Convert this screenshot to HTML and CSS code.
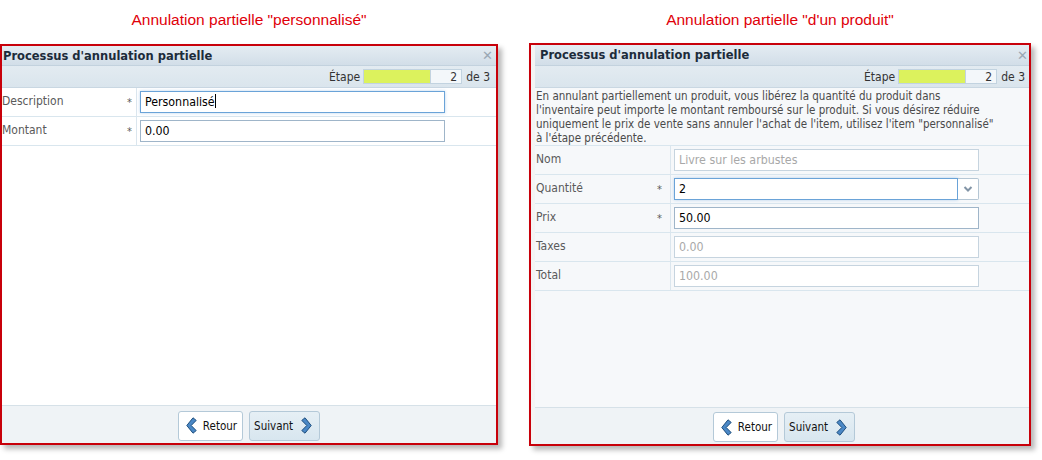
FILE: index.html
```html
<!DOCTYPE html>
<html lang="fr">
<head>
<meta charset="UTF-8">
<title>Annulation partielle</title>
<link rel="stylesheet" href="styles.css">
</head>
<body>
    <div class="page">
        <div class="column column-left">
            <div class="caption">Annulation partielle "personnalisé"</div>
            <div class="shot">
                <div class="window">
                    <div class="win-header">
                        <span class="win-title">Processus d'annulation partielle</span>
                        <span class="win-close">&#x2715;</span>
                    </div>
                    <div class="win-toolbar">
                        <span>Étape</span>
                        <span class="step-bar"></span>
                        <span class="step-num">2</span>
                        <span>de 3</span>
                    </div>
                    <div class="win-body">
                        <div class="row">
                            <div class="label"><span>Description</span><span class="star">*</span></div>
                            <div class="field focus">Personnalisé<span class="caret"></span></div>
                        </div>
                        <div class="row">
                            <div class="label"><span>Montant</span><span class="star">*</span></div>
                            <div class="field">0.00</div>
                        </div>
                    </div>
                    <div class="win-footer">
                        <button class="btn"><svg width="11" height="17" viewBox="0 0 11 17"><polygon points="7,0.8 10.2,3.4 5.2,8.5 10.2,13.6 7,16.2 0.8,8.5" fill="#4b88c6" stroke="#1f4f7e" stroke-width="1"/></svg>Retour</button>
                        <button class="btn btn-next">Suivant<svg width="11" height="17" viewBox="0 0 11 17"><polygon points="4,0.8 0.8,3.4 5.8,8.5 0.8,13.6 4,16.2 10.2,8.5" fill="#4b88c6" stroke="#1f4f7e" stroke-width="1"/></svg></button>
                    </div>
                </div>
            </div>
        </div>

        <div class="column column-right">
            <div class="caption">Annulation partielle "d'un produit"</div>
            <div class="shot">
                <div class="window">
                    <div class="win-header">
                        <span class="win-title">Processus d'annulation partielle</span>
                        <span class="win-close">&#x2715;</span>
                    </div>
                    <div class="win-toolbar">
                        <span>Étape</span>
                        <span class="step-bar"></span>
                        <span class="step-num">2</span>
                        <span>de 3</span>
                    </div>
                    <div class="win-body">
                        <p class="intro">En annulant partiellement un produit, vous libérez la quantité du produit dans<br>l'inventaire peut importe le montant remboursé sur le produit. Si vous désirez réduire<br>uniquement le prix de vente sans annuler l'achat de l'item, utilisez l'item "personnalisé"<br>à l'étape précédente.</p>
                        <div class="row">
                            <div class="label"><span>Nom</span></div>
                            <div class="field disabled">Livre sur les arbustes</div>
                        </div>
                        <div class="row">
                            <div class="label"><span>Quantité</span><span class="star">*</span></div>
                            <div class="combo">
                                <div class="field focus">2</div>
                                <span class="trigger"><svg width="10" height="6" viewBox="0 0 10 6"><polyline points="1.5,1 5,4.5 8.5,1" fill="none" stroke="#8294a6" stroke-width="2"/></svg></span>
                            </div>
                        </div>
                        <div class="row">
                            <div class="label"><span>Prix</span><span class="star">*</span></div>
                            <div class="field">50.00</div>
                        </div>
                        <div class="row">
                            <div class="label"><span>Taxes</span></div>
                            <div class="field disabled">0.00</div>
                        </div>
                        <div class="row">
                            <div class="label"><span>Total</span></div>
                            <div class="field disabled">100.00</div>
                        </div>
                    </div>
                    <div class="win-footer">
                        <button class="btn"><svg width="11" height="17" viewBox="0 0 11 17"><polygon points="7,0.8 10.2,3.4 5.2,8.5 10.2,13.6 7,16.2 0.8,8.5" fill="#4b88c6" stroke="#1f4f7e" stroke-width="1"/></svg>Retour</button>
                        <button class="btn btn-next">Suivant<svg width="11" height="17" viewBox="0 0 11 17"><polygon points="4,0.8 0.8,3.4 5.8,8.5 0.8,13.6 4,16.2 10.2,8.5" fill="#4b88c6" stroke="#1f4f7e" stroke-width="1"/></svg></button>
                    </div>
                </div>
            </div>
        </div>
    </div>
</body>
</html>
```

FILE: styles.css
```css
body {
    margin: 0;
    background-color: #fff;
    font-family: "DejaVu Sans Condensed", "DejaVu Sans", sans-serif;
    font-size: 11px;
    color: #333;
}
.page {
    display: flex;
    gap: 31px;
    width: 1042px;
    height: 460px;
}
.column {
    display: flex;
    flex-direction: column;
}
.column-left {
    width: 498px;
}
.column-right {
    width: 502px;
}
.caption {
    font-family: "Liberation Sans", Arial, sans-serif;
    font-size: 15.5px;
    color: #e0000a;
    text-align: center;
    height: 44px;
    line-height: 40px;
}
.column-right .caption {
    height: 43px;
}
.shot {
    border: 2px solid #c8000a;
    box-shadow: 4px 4px 5px rgba(0, 0, 0, 0.28);
    overflow: hidden;
    display: flex;
    height: 397px;
}
.column-right .shot {
    height: 399px;
    padding-left: 4px;
    background: linear-gradient(to right, #f4f4f4, #c8c8c8);
}
.window {
    flex: 1;
    display: flex;
    flex-direction: column;
    background-color: #fff;
}
.column-right .window {
    margin-right: -4px;
}
.win-header {
    height: 19px;
    display: flex;
    align-items: center;
    justify-content: space-between;
    padding: 0 5px;
    background: linear-gradient(#e4ecf2, #d2dee8);
    border-bottom: 1px solid #c3d2de;
}
.column-left .win-header {
    padding-left: 1px;
    padding-right: 3px;
}
.column-right .win-header {
    height: 20px;
}
.win-title {
    font-family: "DejaVu Sans", sans-serif;
    font-weight: bold;
    font-size: 11.5px;
    color: #1c2b3a;
}
.win-close {
    font-family: "DejaVu Sans", sans-serif;
    font-size: 13px;
    font-weight: bold;
    color: #9aa8b4;
}
.win-toolbar {
    height: 21px;
    display: flex;
    align-items: center;
    justify-content: flex-end;
    gap: 3px;
    padding-right: 6px;
    background: linear-gradient(#e3ebf1, #dae5ed);
    border-bottom: 1px solid #c9d7e2;
    font-size: 12px;
    color: #333;
}
.column-right .win-toolbar {
    padding-right: 8px;
}
.step-bar {
    width: 68px;
    height: 15px;
    background-color: #dcf25d;
    border: 1px solid #c2d3e0;
    box-sizing: border-box;
}
.step-num {
    width: 31px;
    height: 15px;
    line-height: 15px;
    margin-left: -3px;
    margin-right: 1px;
    box-sizing: border-box;
    text-align: right;
    padding-right: 4px;
    background-color: #f3f7fa;
    border: 1px solid #c2d3e0;
    border-left: none;
}
.win-body {
    flex: 1;
    background-color: #fff;
}
.column-right .win-body {
    background-color: #f6f8fa;
}
.intro {
    margin: 0;
    padding: 1px 1px 0 1px;
    line-height: 14px;
    font-size: 11.5px;
    color: #4a4a4a;
    white-space: nowrap;
    border-bottom: 1px solid #d9e6ee;
}
.row {
    display: flex;
    align-items: center;
    height: 28px;
    border-bottom: 1px solid #d9e6ee;
}
.label {
    width: 136px;
    height: 100%;
    box-sizing: border-box;
    padding: 6px 8px 0 1px;
    display: flex;
    justify-content: space-between;
    align-items: flex-start;
    border-right: 1px solid #dbe6ee;
    font-size: 12px;
    color: #5a5a5a;
}
.column-left .label {
    width: 135px;
    padding-left: 0;
    padding-right: 4px;
}
.star {
    font-size: 11px;
    padding-top: 2px;
}
.field {
    width: 305px;
    height: 22px;
    box-sizing: border-box;
    margin-left: 3px;
    padding: 0 4px;
    line-height: 20px;
    font-size: 12.3px;
    color: #000;
    background-color: #fff;
    border: 1px solid #9fb5c9;
}
.field.focus {
    border-color: #6aa3d8;
    box-shadow: 0 0 3px rgba(100, 160, 220, 0.45);
}
.field.disabled {
    color: #a8a8a8;
    border-color: #c6d4df;
}
.caret {
    display: inline-block;
    width: 1px;
    height: 14px;
    vertical-align: -2px;
    background-color: #000;
}
.combo {
    display: flex;
    margin-left: 3px;
}
.combo .field {
    width: 284px;
    margin-left: 0;
}
.trigger {
    width: 21px;
    height: 22px;
    box-sizing: border-box;
    display: flex;
    align-items: center;
    justify-content: center;
    background-color: #fff;
    border: 1px solid #b5c6d4;
    border-left: none;
    border-radius: 0 2px 2px 0;
}
.win-footer {
    height: 37px;
    display: flex;
    align-items: center;
    justify-content: center;
    gap: 6px;
    padding-top: 2px;
    box-sizing: border-box;
    background-color: #eff3f6;
    border-top: 1px solid #d6e1e8;
}
.column-left .win-footer {
    height: 38px;
}
.btn {
    height: 30px;
    display: flex;
    align-items: center;
    gap: 6px;
    padding: 0 5px 0 7px;
    font-family: "DejaVu Sans Condensed", "DejaVu Sans", sans-serif;
    font-size: 11.5px;
    color: #111;
    background-color: #fff;
    border: 1px solid #b4c9d8;
    border-radius: 3px;
}
.btn-next {
    padding: 0 7px 0 4px;
    gap: 8px;
    background: linear-gradient(#e6eff5, #d8e6ef);
}
```
